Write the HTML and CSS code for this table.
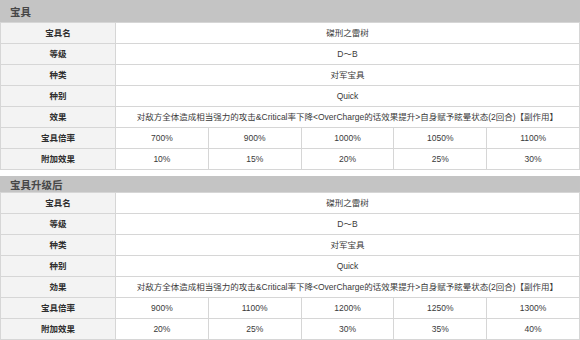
FILE: index.html
```html
<!DOCTYPE html>
<html lang="zh">
<head>
<meta charset="utf-8">
<title>宝具</title>
<link rel="stylesheet" href="styles.css">
</head>
<body>
<section class="block">
  <h2 class="block-title first">宝具</h2>
  <table class="np">
    <colgroup><col class="c-label"><col class="c-v"><col class="c-v"><col class="c-v"><col class="c-v"><col class="c-v"></colgroup>
    <tr><th>宝具名</th><td colspan="5">磔刑之雷树</td></tr>
    <tr><th>等级</th><td colspan="5">D～B</td></tr>
    <tr><th>种类</th><td colspan="5">对军宝具</td></tr>
    <tr><th>种别</th><td colspan="5">Quick</td></tr>
    <tr><th>效果</th><td colspan="5">对敌方全体造成相当强力的攻击&amp;Critical率下降&lt;OverCharge的话效果提升&gt;自身赋予眩晕状态(2回合)【副作用】</td></tr>
    <tr><th>宝具倍率</th><td>700%</td><td>900%</td><td>1000%</td><td>1050%</td><td>1100%</td></tr>
    <tr><th>附加效果</th><td>10%</td><td>15%</td><td>20%</td><td>25%</td><td>30%</td></tr>
  </table>
</section>
<section class="block">
  <h2 class="block-title second">宝具升级后</h2>
  <table class="np">
    <colgroup><col class="c-label"><col class="c-v"><col class="c-v"><col class="c-v"><col class="c-v"><col class="c-v"></colgroup>
    <tr><th>宝具名</th><td colspan="5">磔刑之雷树</td></tr>
    <tr><th>等级</th><td colspan="5">D～B</td></tr>
    <tr><th>种类</th><td colspan="5">对军宝具</td></tr>
    <tr><th>种别</th><td colspan="5">Quick</td></tr>
    <tr><th>効果</th><td colspan="5">对敌方全体造成相当强力的攻击&amp;Critical率下降&lt;OverCharge的话效果提升&gt;自身赋予眩晕状态(2回合)【副作用】</td></tr>
    <tr><th>宝具倍率</th><td>900%</td><td>1100%</td><td>1200%</td><td>1250%</td><td>1300%</td></tr>
    <tr><th>附加效果</th><td>20%</td><td>25%</td><td>30%</td><td>35%</td><td>40%</td></tr>
  </table>
</section>
</body>
</html>
```
FILE: styles.css
```css
html, body {
  margin: 0;
  padding: 0;
  background: #ffffff;
}
body {
  width: 580px;
  font-family: "Liberation Sans", "Noto Sans CJK SC", sans-serif;
  color: #333333;
}
.block-title {
  margin: 0;
  background: #c4c4c4;
  color: #474747;
  font-size: 10.5px;
  font-weight: bold;
  padding-left: 10px;
  display: flex;
  align-items: center;
}
.block-title.first {
  height: 22px;
}
.block-title.second {
  height: 16px;
  margin-top: 6px;
}
.np {
  width: 580px;
  border-collapse: collapse;
  table-layout: fixed;
}
.c-label { width: 115px; }
.np th,
.np td {
  height: 20px;
  padding: 0;
  border: 1px solid #d6d6d6;
  text-align: center;
  font-size: 8.5px;
  line-height: 12px;
  white-space: nowrap;
}
.np th {
  background: #f3f3f3;
  font-weight: bold;
  color: #2e2e2e;
}
.np td {
  color: #3a3a3a;
}
```
